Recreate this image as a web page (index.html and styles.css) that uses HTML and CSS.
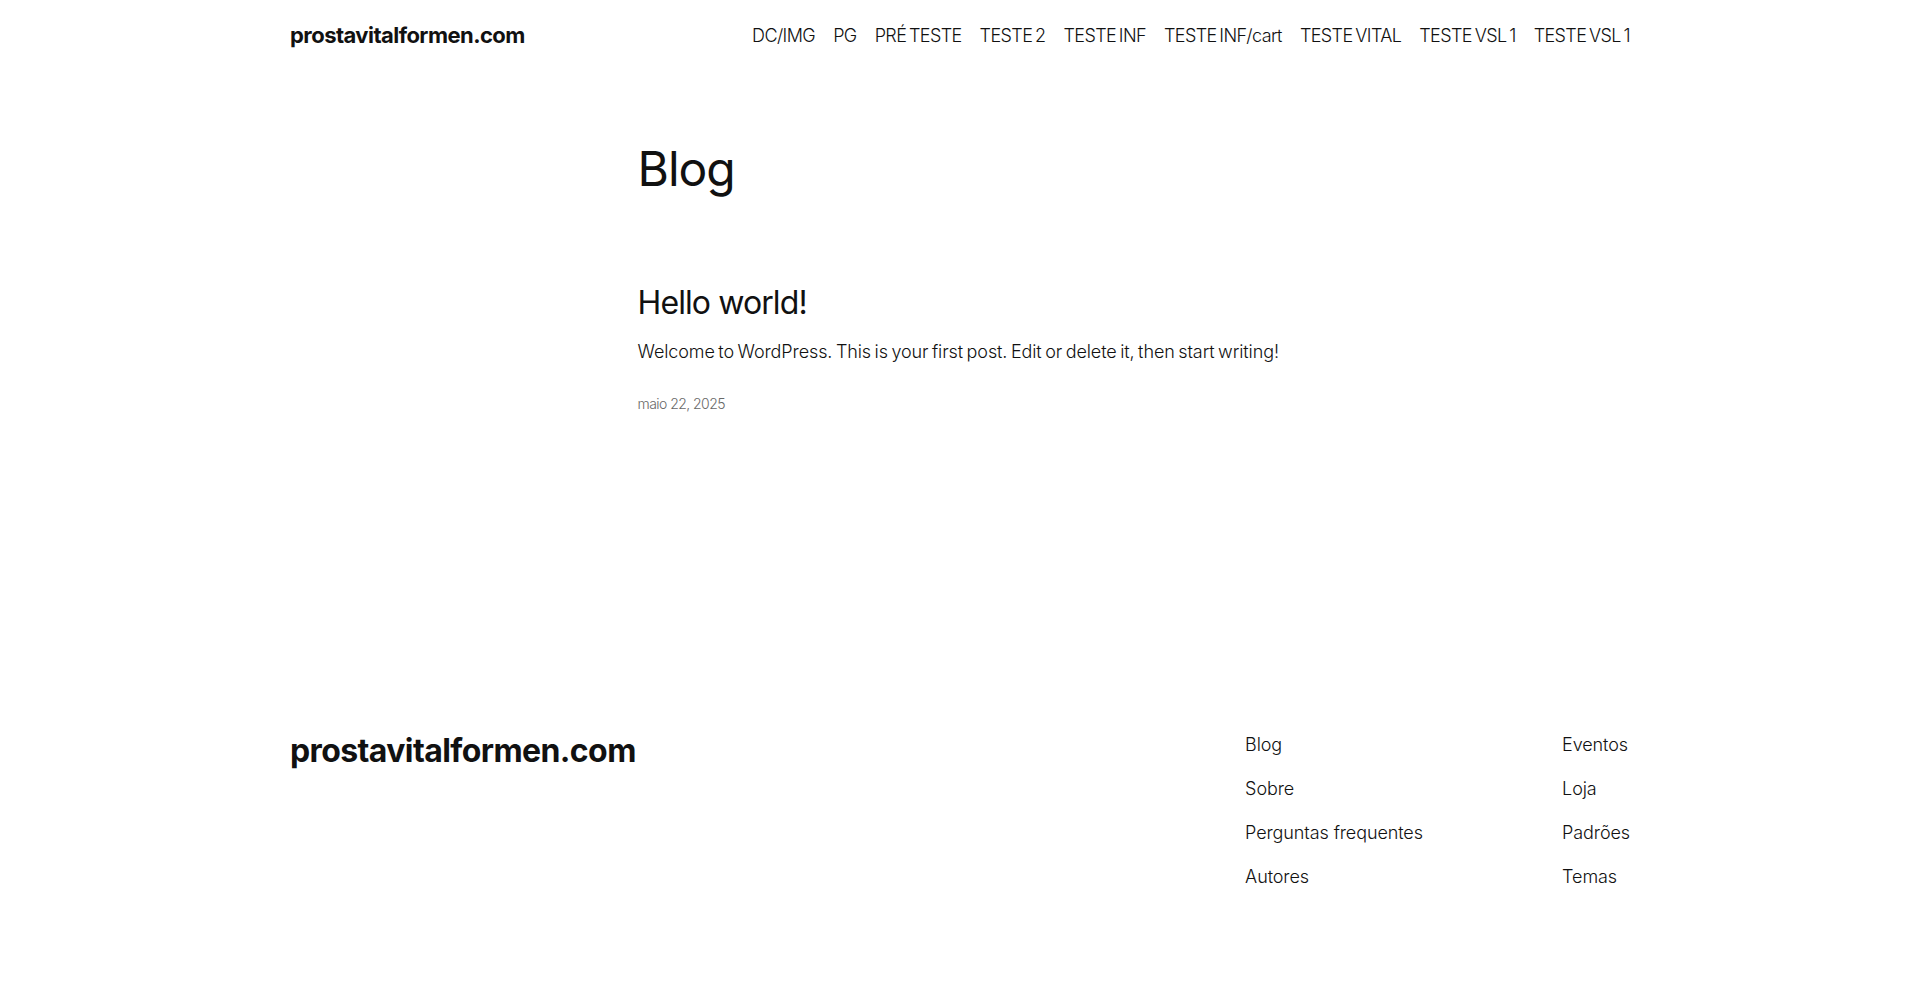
FILE: index.html
```html
<!DOCTYPE html>
<html lang="pt-BR">
<head>
<meta charset="utf-8">
<title>Blog – prostavitalformen.com</title>
<link rel="stylesheet" href="styles.css">
</head>
<body>
<header class="site-header">
  <div class="wide header-row">
    <a class="site-title" href="#">prostavitalformen.com</a>
    <nav class="main-nav">
      <a href="#">DC/IMG</a>
      <a href="#">PG</a>
      <a href="#">PRÉ TESTE</a>
      <a href="#">TESTE 2</a>
      <a href="#">TESTE INF</a>
      <a href="#">TESTE INF/cart</a>
      <a href="#">TESTE VITAL</a>
      <a href="#">TESTE VSL 1</a>
      <a href="#">TESTE VSL 1</a>
    </nav>
  </div>
</header>

<main class="content">
  <h1 class="page-title">Blog</h1>
  <article class="post">
    <h2 class="post-title"><a href="#">Hello world!</a></h2>
    <p class="post-excerpt">Welcome to WordPress. This is your first post. Edit or delete it, then start writing!</p>
    <time class="post-date">maio 22, 2025</time>
  </article>
</main>

<footer class="site-footer">
  <div class="wide footer-row">
    <a class="footer-title" href="#">prostavitalformen.com</a>
    <ul class="footer-col">
      <li><a href="#">Blog</a></li>
      <li><a href="#">Sobre</a></li>
      <li><a href="#">Perguntas frequentes</a></li>
      <li><a href="#">Autores</a></li>
    </ul>
    <ul class="footer-col">
      <li><a href="#">Eventos</a></li>
      <li><a href="#">Loja</a></li>
      <li><a href="#">Padrões</a></li>
      <li><a href="#">Temas</a></li>
    </ul>
  </div>
</footer>
</body>
</html>
```

FILE: styles.css
```css
* {
  box-sizing: border-box;
}

html, body {
  margin: 0;
  padding: 0;
  background: #ffffff;
}

body {
  font-family: Inter, "Noto Sans", "Liberation Sans", sans-serif;
  font-weight: 300;
  font-size: 18px;
  line-height: 1.4;
  color: #111111;
  letter-spacing: -0.1px;
}

a {
  color: inherit;
  text-decoration: none;
}

.wide {
  width: 1340px;
  margin: 0 auto;
}

/* Header */
.site-header {
  padding: 20px 0 19px;
}

.header-row {
  display: flex;
  justify-content: space-between;
  align-items: center;
}

.site-title {
  font-size: 22px;
  font-weight: 700;
  letter-spacing: -0.55px;
  line-height: 1.4;
}

.main-nav {
  display: flex;
  gap: 18px;
  font-size: 18px;
  line-height: 1.4;
  letter-spacing: -0.6px;
  word-spacing: -1.8px;
}

/* Main */
.content {
  width: 645px;
  margin: 0 auto;
  padding-top: 70px;
}

.page-title {
  margin: 0;
  font-size: 48px;
  font-weight: 400;
  line-height: 1.2;
  letter-spacing: -1px;
}

.post {
  margin-top: 87px;
}

.post-title {
  margin: 0;
  font-size: 32px;
  font-weight: 400;
  line-height: 1.2;
  letter-spacing: -0.9px;
}

.post-excerpt {
  margin: 16px 0 0;
  letter-spacing: -0.1px;
  word-spacing: -1.4px;
  white-space: nowrap;
}

.post-date {
  display: block;
  margin-top: 30px;
  font-size: 14px;
  line-height: 1.4;
  color: #686868;
  letter-spacing: -0.55px;
}

/* Footer */
.site-footer {
  margin-top: 318px;
  padding-bottom: 80px;
}

.footer-row {
  display: grid;
  grid-template-columns: 1fr 317px auto;
  align-items: start;
}

.footer-title {
  font-size: 32px;
  font-weight: 700;
  letter-spacing: -0.6px;
  line-height: 1.2;
}

.footer-col {
  list-style: none;
  margin: 0;
  padding: 0;
  display: flex;
  flex-direction: column;
  gap: 19px;
}

.footer-col li {
  line-height: 1.4;
}
```
